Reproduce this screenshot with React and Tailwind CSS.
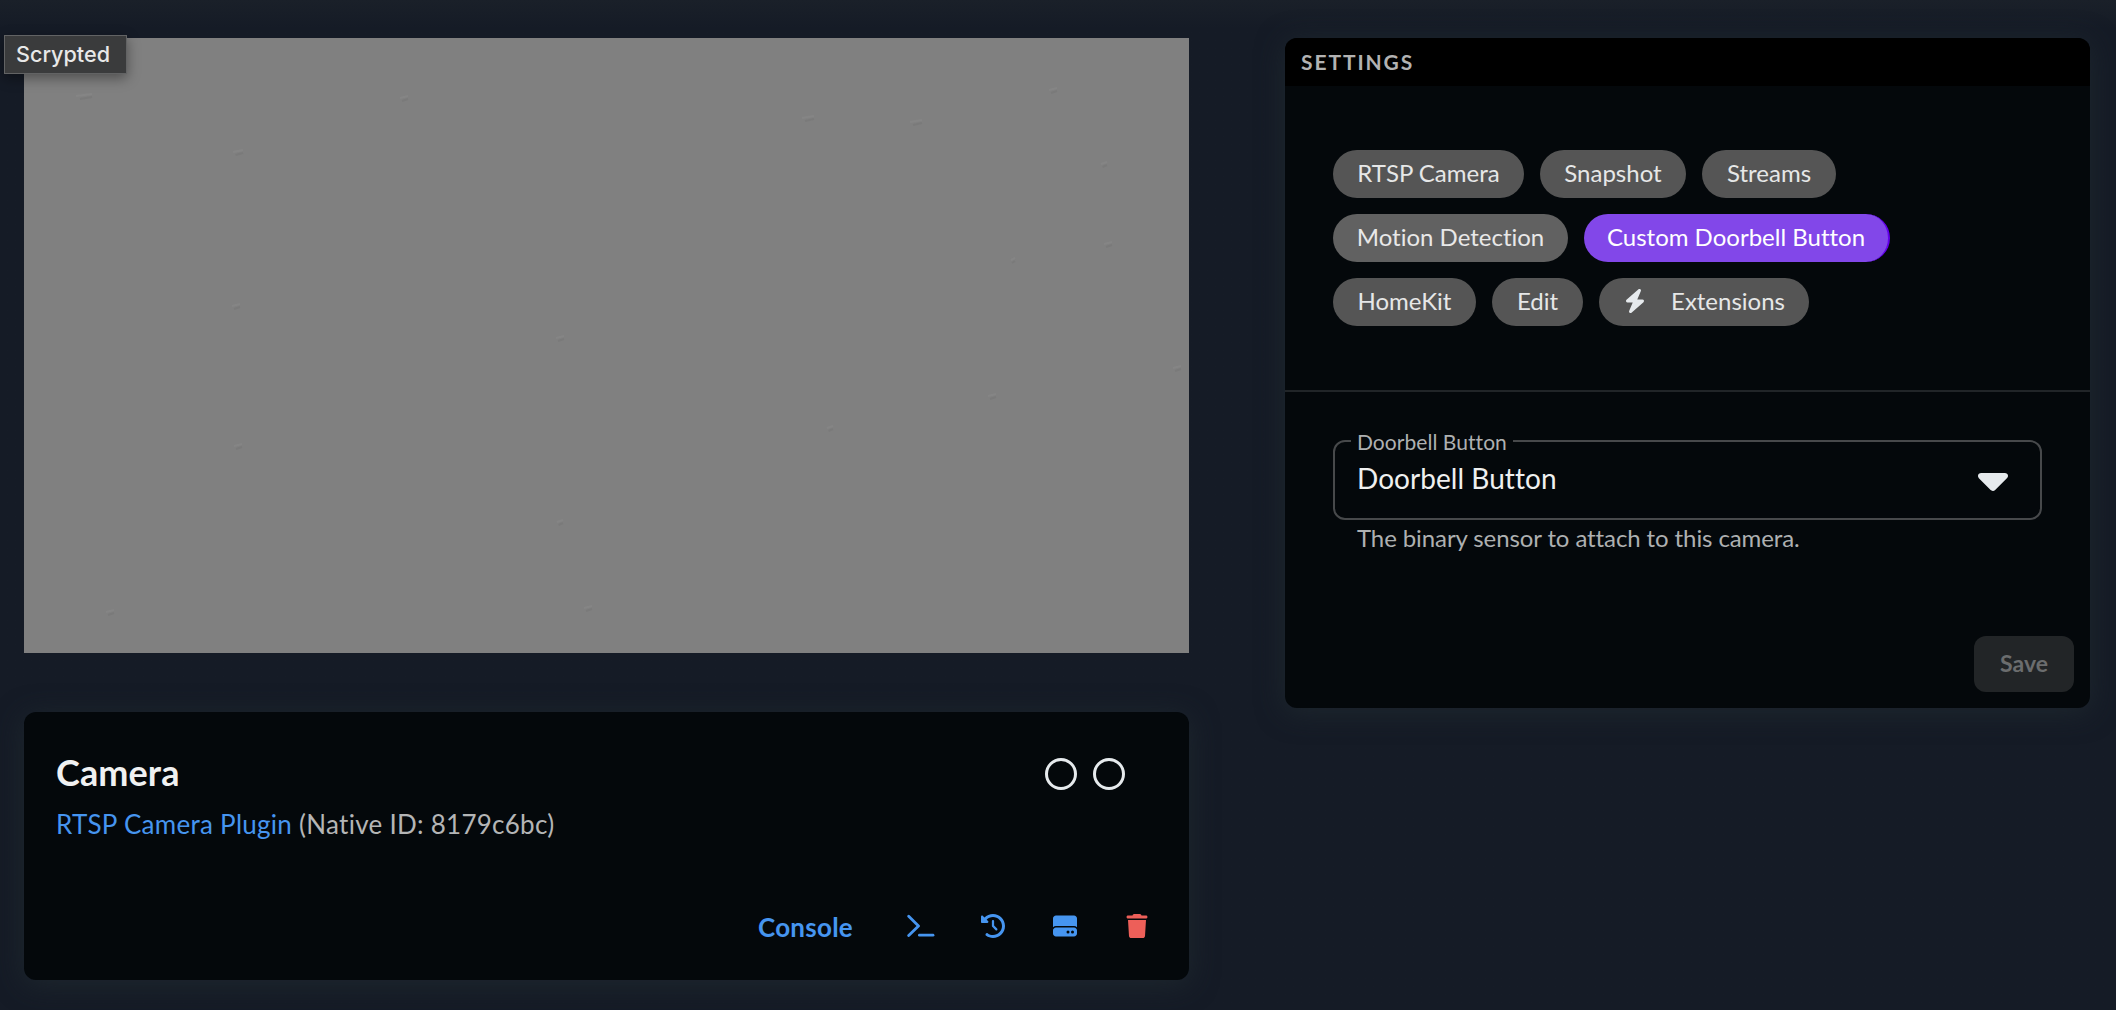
import React from "react";
import { FaBolt, FaClockRotateLeft, FaHardDrive, FaTrash, FaCaretDown } from "react-icons/fa6";

function Chip({ children, className = "bg-[#555555] text-[#e6e7e7]", width }) {
  return (
    <span className={`flex h-12 items-center justify-center rounded-full pb-[2px] ${width} ${className}`}>{children}</span>
  );
}

function TerminalIcon() {
  return (
    <svg width="28" height="24" viewBox="0 0 28 24" fill="none" stroke="currentColor" strokeWidth="2.8" strokeLinecap="round" strokeLinejoin="round">
      <path d="M1.7 2.3 L11.5 12 L1.7 21.6" />
      <path d="M12.4 21.2 H26" />
    </svg>
  );
}

// Faint compression specks: [x, y, radius]
const specks = [
  [784, 80, 6], [892, 84, 6], [380, 60, 4], [214, 114, 5], [1029, 52, 4], [1080, 126, 3],
  [1084, 206, 4], [989, 222, 2], [212, 268, 4], [536, 300, 4], [1153, 330, 4], [968, 358, 4],
  [214, 408, 4], [806, 390, 3], [536, 484, 3], [86, 574, 4], [564, 570, 4], [60, 58, 8],
];

function VideoFrame() {
  return (
    <div className="h-[615px] bg-[#808080]">
      <svg width="1165" height="615" fill="none">
        {specks.map(([x, y, r]) => (
          <g key={`${x}-${y}`} strokeWidth="2" strokeOpacity="0.7">
            <path d={`M${x - r} ${y} L${x + r} ${y - 2}`} stroke="#888888" />
            <path d={`M${x - r / 2} ${y + 3} L${x + r} ${y + 1}`} stroke="#787878" />
          </g>
        ))}
      </svg>
    </div>
  );
}

function CameraCard() {
  return (
    <section className="flex h-[268px] flex-col rounded-xl bg-[#04080b] shadow-[0_4px_28px_rgba(34,44,50,0.75)]">
      <div className="flex h-[124px] items-start justify-between pr-16 pl-8">
        <div>
          <h1 className="mt-[38px] text-[36px] leading-[44px] font-bold tracking-[0.1px] text-[#f0f1f2]">Camera</h1>
          <p className="mt-[14px] text-[26px] leading-8 tracking-[0.27px] whitespace-nowrap text-[#b4b5b6]">
            <a className="text-[#4695f0]">RTSP Camera Plugin</a> (Native ID: 8179c6bc)
          </p>
        </div>
        <div className="mt-[46px] flex gap-4">
          <span className="size-8 rounded-full border-[3px] border-[#e6eaed]" />
          <span className="size-8 rounded-full border-[3px] border-[#e6eaed]" />
        </div>
      </div>
      <div className="mt-[66px] flex h-12 items-center pl-[734px] text-[#4695f0]">
        <span className="w-[149px] pt-[2px] text-[26px] font-bold tracking-[0.25px]">Console</span>
        <span className="flex w-[74px]"><TerminalIcon /></span>
        <span className="w-[72px]"><FaClockRotateLeft size={24} /></span>
        <span className="w-[72px]"><FaHardDrive size={24} /></span>
        <FaTrash size={24} className="text-[#ed5f59]" />
      </div>
    </section>
  );
}

function Settings() {
  return (
    <section className="flex h-[670px] w-[805px] flex-col overflow-hidden rounded-xl bg-[#04080b] shadow-[0_4px_28px_rgba(34,44,50,0.75)]">
      <header className="flex h-12 items-center bg-black pl-4 text-[21px] font-bold tracking-[1.9px] text-[#b2b2b2]">SETTINGS</header>
      <div className="flex h-[304px] flex-col gap-4 px-12 pt-16 text-[24px] [font-variant-ligatures:none]">
        <div className="flex gap-4">
          <Chip width="w-[191px]">RTSP Camera</Chip>
          <Chip width="w-[146px]">Snapshot</Chip>
          <Chip width="w-[134px]">Streams</Chip>
        </div>
        <div className="flex gap-4">
          <Chip width="w-[235px]" className="bg-[#616161] text-[#e8e8e8]">Motion Detection</Chip>
          <Chip width="w-[306px]" className="border-r-2 border-[#6200ea] bg-[#8247e9] text-white">Custom Doorbell Button</Chip>
        </div>
        <div className="flex gap-4">
          <Chip width="w-[143px]">HomeKit</Chip>
          <Chip width="w-[91px]">Edit</Chip>
          <Chip width="w-[210px]"><FaBolt size={24} className="mr-6 text-[#e6eaed]" />Extensions</Chip>
        </div>
      </div>
      <div className="h-0.5 shrink-0 bg-[#212528]" />
      <div className="px-12 pt-[34px] [font-variant-ligatures:none]">
        <fieldset className="h-[94px] min-w-0 rounded-xl border-2 border-[#47494b] pl-4">
          <legend className="px-[6px] pt-[3px] text-[21px] leading-[26px] tracking-[0.05px] text-[#aeb0b1]">Doorbell Button</legend>
          <div className="-mt-px flex items-center justify-between pr-[23px] pl-[6px] text-[28px] leading-9 tracking-[0.05px] text-[#eff0f0]">
            Doorbell Button<FaCaretDown size={48} className="relative top-px text-[#e6eaed]" />
          </div>
        </fieldset>
        <p className="mt-[2px] pl-6 text-[24px] leading-8 tracking-[-0.1px] text-[#aeb0b1]">The binary sensor to attach to this camera.</p>
      </div>
      <button className="mt-auto mr-4 mb-4 h-14 w-[100px] self-end rounded-xl bg-[#222527] pb-[2px] text-[23px] font-bold text-[#6b6d6e]">Save</button>
    </section>
  );
}

export default function App() {
  return (
    <main className="relative flex h-[1010px] w-[2116px] items-start gap-24 overflow-hidden bg-[#151b26] bg-linear-to-b from-[#1a2029] to-[#151b26] to-[28px] pt-[38px] pl-6 font-['Lato',sans-serif]">
      <div className="flex w-[1165px] flex-col gap-[59px]">
        <VideoFrame />
        <CameraCard />
      </div>
      <Settings />
      <div className="absolute top-[35px] left-1 flex h-[39px] w-[123px] items-center border border-[#626364] bg-[#3a3b3c] pl-[11px] font-['Inter',sans-serif] text-[21.6px] font-medium text-[#e8e8e8] shadow-[0_4px_12px_rgba(0,0,0,0.4)]">Scrypted</div>
    </main>
  );
}
